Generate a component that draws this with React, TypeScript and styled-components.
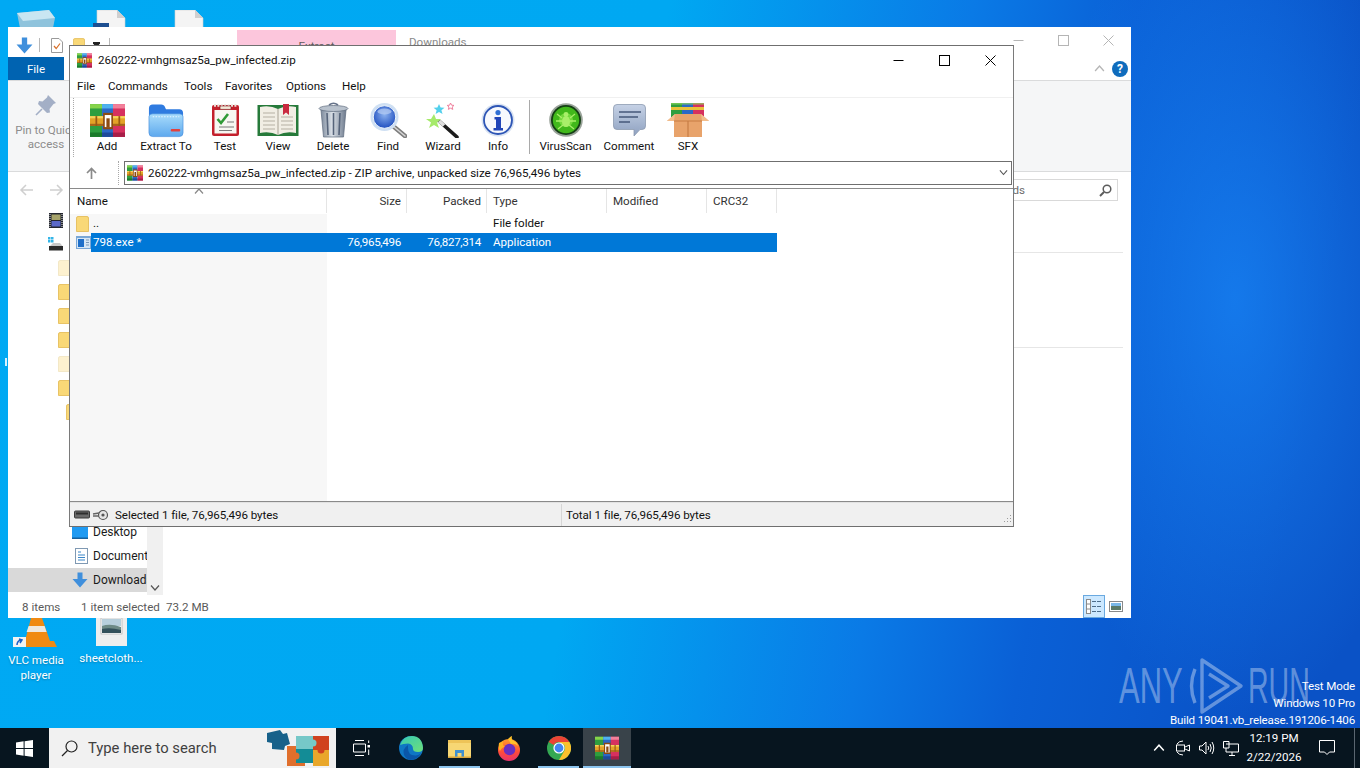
import styled, { createGlobalStyle } from "styled-components";
import { ReactNode } from "react";

const GlobalStyle = createGlobalStyle`
    html, body {
        margin: 0;
        padding: 0;
        width: 1360px;
        height: 768px;
        overflow: hidden;
        font-family: Roboto, "Liberation Sans", sans-serif;
        font-size: 11.6px;
        color: #1a1a1a;
    }
    * { box-sizing: border-box; }
    svg { display: block; flex-shrink: 0; }
`;

/* ---------- desktop ---------- */

const Screen = styled.div`
    width: 1360px;
    height: 768px;
    display: flex;
    flex-direction: column;
    overflow: hidden;
`;

const Wallpaper = styled.div`
    flex: 1;
    position: relative;
    overflow: hidden;
    background:
        radial-gradient(ellipse 200px 420px at 1235px 300px, rgba(24, 132, 245, 0.75), rgba(24, 132, 245, 0) 100%),
        linear-gradient(100deg, #00a9f3 0, #00a8f2 660px, #0a7ae6 960px, #0a60d6 1120px, #0a52c6 1360px);
`;

const ShortcutIcon = styled.div<{ $x: number; $y: number; $w: number }>`
    position: absolute;
    left: ${(p) => p.$x}px;
    top: ${(p) => p.$y}px;
    width: ${(p) => p.$w}px;
    display: flex;
    flex-direction: column;
    align-items: center;
`;

const ShortcutLabel = styled.div`
    color: #fff;
    text-align: center;
    line-height: 15px;
    margin-top: 5px;
    white-space: nowrap;
    text-shadow: 0 1px 2px rgba(0, 0, 0, 0.25);
`;

const EdgeSpeck = styled.div`
    position: absolute;
    left: 5px;
    top: 358px;
    width: 2px;
    height: 8px;
    background: #d8f2ff;
`;

/* ---------- explorer behind ---------- */

const ExplorerWindow = styled.div`
    position: absolute;
    left: 8px;
    top: 27px;
    width: 1123px;
    height: 591px;
    background: #fff;
    display: flex;
    flex-direction: column;
`;

const ExplorerTitle = styled.div`
    height: 30px;
    display: flex;
    align-items: stretch;
    color: #8a8a8a;
`;

const QuickAccess = styled.div`
    width: 229px;
    display: flex;
    align-items: center;
    padding: 6px 0 0 8px;
    gap: 6px;
`;

const QuickSep = styled.div`
    width: 1px;
    height: 14px;
    background: #b8b8b8;
    margin-right: 5px;
`;

const DropMark = styled.div`
    width: 7px;
    height: 7px;
    margin: 0 3px 0 2px;
    border-top: 1px solid #222;
    clip-path: polygon(0 0, 100% 0, 100% 25%, 50% 100%, 0 25%);
    background: #222;
`;

const ContextTab = styled.div`
    width: 159px;
    margin-top: 3px;
    background: #fcc6dc;
    text-align: center;
    padding-top: 9px;
    color: #5c5c5c;
`;

const TitleText = styled.div`
    padding: 8px 0 0 13px;
    flex: 1;
`;

const ExplorerButtons = styled.div`
    display: flex;
    align-items: flex-start;
    padding-top: 8px;
    margin-right: 17px;
    gap: 34px;
`;

const TabRow = styled.div`
    height: 23px;
    display: flex;
    align-items: center;
    justify-content: space-between;
    padding-right: 3px;
`;

const FileTab = styled.div`
    width: 56px;
    height: 23px;
    background: #0063b1;
    color: #fff;
    display: flex;
    align-items: center;
    justify-content: center;
`;

const TabRight = styled.div`
    display: flex;
    align-items: center;
    gap: 7px;
`;

const HelpBadge = styled.div`
    width: 16px;
    height: 16px;
    border-radius: 50%;
    background: #0f6cbd;
    color: #fff;
    font-weight: 700;
    font-size: 12px;
    line-height: 16px;
    text-align: center;
`;

const Ribbon = styled.div`
    height: 92px;
    background: #f5f6f7;
    border-top: 1px solid #dadbdc;
    border-bottom: 1px solid #dadbdc;
    display: flex;
    flex-direction: column;
    align-items: flex-start;
    padding: 13px 0 0 7px;
    color: #8d8d8d;
    line-height: 14px;
`;

const PinBlock = styled.div`
    display: flex;
    flex-direction: column;
    align-items: center;
    text-align: center;
    width: 62px;
    white-space: nowrap;
    gap: 7px;
`;

const NavBar = styled.div`
    height: 36px;
    display: flex;
    align-items: center;
    padding: 0 13px 0 11px;
`;

const NavArrows = styled.div`
    display: flex;
    gap: 17px;
`;

const SearchBox = styled.div`
    margin-left: auto;
    width: 200px;
    height: 22px;
    border: 1px solid #d9d9d9;
    display: flex;
    align-items: center;
    justify-content: space-between;
    padding: 0 5px 0 10px;
    color: #6d6d6d;
`;

const ExplorerBody = styled.div`
    flex: 1;
    display: flex;
    min-height: 0;
`;

const NavTree = styled.div`
    width: 139px;
    display: flex;
    flex-direction: column;
    overflow: hidden;
`;

const TreeRow = styled.div<{ $indent: number; $selected?: boolean }>`
    height: 24px;
    flex-shrink: 0;
    display: flex;
    align-items: center;
    gap: 5px;
    padding-left: ${(p) => p.$indent}px;
    background: ${(p) => (p.$selected ? "#d9d9d9" : "transparent")};
    white-space: nowrap;
    font-size: 12px;
`;

const TreeScroll = styled.div`
    width: 16px;
    background: #f0f0f0;
    display: flex;
    flex-direction: column;
    justify-content: flex-end;
    align-items: center;
    padding-bottom: 4px;
`;

const ContentPane = styled.div`
    flex: 1;
    padding: 0 8px 0 0;
`;

const GroupLine = styled.div<{ $gap: number }>`
    height: 1px;
    margin-top: ${(p) => p.$gap}px;
    background: #e6e6e6;
`;

const ExplorerStatus = styled.div`
    height: 23px;
    display: flex;
    align-items: center;
    padding-left: 14px;
    color: #5a5a5a;
`;

const StatusPart = styled.span<{ $w: number }>`
    width: ${(p) => p.$w}px;
    white-space: nowrap;
`;

const ViewButtons = styled.div`
    margin-left: auto;
    display: flex;
    align-items: center;
    height: 100%;
    gap: 4px;
    padding-right: 8px;
`;

const ViewButton = styled.div<{ $on?: boolean }>`
    width: ${(p) => (p.$on ? "22px" : "14px")};
    height: 23px;
    display: flex;
    align-items: center;
    justify-content: center;
    background: ${(p) => (p.$on ? "#cce8ff" : "transparent")};
    border: ${(p) => (p.$on ? "1px solid #6aa9e0" : "none")};
`;

/* ---------- winrar window ---------- */

const RarWindow = styled.div`
    position: absolute;
    left: 69px;
    top: 45px;
    width: 945px;
    height: 482px;
    background: #fff;
    border: 1px solid #6f6f6f;
    border-left-color: #7a7a7a;
    border-right-color: #7a7a7a;
    display: flex;
    flex-direction: column;
`;

const RarTitle = styled.div`
    height: 28px;
    display: flex;
    align-items: center;
    padding: 0 0 0 7px;
    gap: 6px;
    color: #111;
`;

const RarTitleText = styled.div`
    flex: 1;
`;

const RarControls = styled.div`
    display: flex;
    align-items: center;
    margin-right: 17px;
    gap: 35px;
`;

const MenuBar = styled.div`
    height: 24px;
    display: flex;
    align-items: center;
    padding-left: 7px;
    border-bottom: 1px solid #f0f0f0;
    color: #111;
`;

const MenuItem = styled.span<{ $w: number }>`
    width: ${(p) => p.$w}px;
`;

const ToolbarRow = styled.div`
    height: 59px;
    display: flex;
    padding-left: 3px;
`;

const Gripper = styled.div`
    width: 1px;
    height: 100%;
    border-left: 1px dotted #a8a8a8;
`;

const ToolButtons = styled.div`
    display: flex;
    padding-left: 11px;
`;

const ToolButton = styled.div<{ $w: number }>`
    width: ${(p) => p.$w}px;
    display: flex;
    flex-direction: column;
    align-items: center;
    justify-content: flex-end;
    height: 55px;
    color: #111;
    white-space: nowrap;
`;

const ToolArt = styled.div`
    height: 38px;
    display: flex;
    align-items: center;
    justify-content: center;
`;

const ToolSep = styled.div`
    width: 1px;
    height: 54px;
    margin-top: 2px;
    background: #a9a9a9;
`;

const AddressRow = styled.div`
    height: 28px;
    padding-top: 4px;
    display: flex;
    align-items: stretch;
`;

const UpSlot = styled.div`
    width: 49px;
    padding-left: 16px;
    display: flex;
    align-items: center;
    border-right: 1px dotted #a8a8a8;
    margin-right: 5px;
`;

const AddressBox = styled.div`
    flex: 1;
    border: 1px solid #6f6f6f;
    display: flex;
    align-items: center;
    gap: 5px;
    padding: 0 3px 0 2px;
    color: #111;
    margin-right: 1px;
`;

const AddressText = styled.div`
    flex: 1;
`;

const FileList = styled.div`
    flex: 1;
    margin-top: 3px;
    border-top: 1px solid #8a8a8a;
    border-bottom: 1px solid #8a8a8a;
    display: flex;
    flex-direction: column;
    min-height: 0;
`;

const ListHeader = styled.div`
    position: relative;
    display: grid;
    grid-template-columns: 257px 80px 80px 120px 100px 70px;
    height: 25px;
`;

const HeadCell = styled.div<{ $right?: boolean; $first?: boolean }>`
    display: flex;
    align-items: center;
    justify-content: ${(p) => (p.$right ? "flex-end" : "flex-start")};
    padding: ${(p) => (p.$right ? "0 5px 0 0" : p.$first ? "0 0 0 7px" : "0 0 0 6px")};
    border-right: 1px solid #e5e5e5;
    color: ${(p) => (p.$first ? "#111" : "#333")};
    height: 24px;
`;

const SortMark = styled.div`
    position: absolute;
    left: 124px;
    top: -1px;
`;

const ListBody = styled.div`
    flex: 1;
    background: linear-gradient(to right, #f7f7f7 257px, #fff 257px);
`;

const FileRow = styled.div`
    display: grid;
    grid-template-columns: 257px 80px 80px 120px 100px 70px;
    height: 19px;
`;

const NameCell = styled.div`
    display: flex;
    align-items: center;
    padding-left: 6px;
`;

const IconSlot = styled.div`
    width: 15px;
    display: flex;
`;

const FileName = styled.div<{ $selected?: boolean }>`
    flex: 1;
    height: 100%;
    padding: 0 0 1px 2px;
    display: flex;
    align-items: center;
    background: ${(p) => (p.$selected ? "#0078d7" : "transparent")};
    color: ${(p) => (p.$selected ? "#fff" : "#111")};
`;

const DataCell = styled.div<{ $selected?: boolean; $right?: boolean }>`
    display: flex;
    align-items: center;
    justify-content: ${(p) => (p.$right ? "flex-end" : "flex-start")};
    padding: ${(p) => (p.$right ? "0 6px 1px 0" : "0 0 1px 6px")};
    letter-spacing: ${(p) => (p.$right ? "-0.3px" : "0")};
    background: ${(p) => (p.$selected ? "#0078d7" : "transparent")};
    color: ${(p) => (p.$selected ? "#fff" : "#111")};
`;

const RarStatus = styled.div`
    height: 24px;
    padding-top: 1px;
    background: #f0f0f0;
    border-top: 1px solid #e2e2e2;
    display: flex;
    align-items: center;
    position: relative;
    color: #111;
    letter-spacing: -0.06px;
`;

const StatusLeft = styled.div`
    width: 492px;
    display: flex;
    align-items: center;
    gap: 6px;
    padding-left: 4px;
    height: 100%;
    border-right: 1px solid #d6d6d6;
`;

const StatusRight = styled.div`
    padding-left: 4px;
`;

const SizeGrip = styled.div`
    position: absolute;
    right: 1px;
    bottom: 1px;
`;

/* ---------- overlays ---------- */

const Watermark = styled.div`
    position: absolute;
    left: 1119px;
    top: 656px;
    display: flex;
    align-items: center;
    color: rgba(255, 255, 255, 0.36);
    font-family: "Liberation Sans", sans-serif;
    font-size: 50px;
    line-height: 60px;
`;

const MarkWord = styled.span<{ $w: number; $scale: number }>`
    display: inline-block;
    width: ${(p) => p.$w}px;
    transform: scaleX(${(p) => p.$scale});
    transform-origin: left center;
`;

const SystemNote = styled.div`
    position: absolute;
    right: 5px;
    top: 678px;
    text-align: right;
    color: #fff;
    line-height: 17px;
    letter-spacing: -0.16px;
`;

/* ---------- taskbar ---------- */

const Taskbar = styled.div`
    height: 40px;
    background: #07151f;
    display: flex;
    align-items: stretch;
`;

const StartButton = styled.div`
    width: 49px;
    display: flex;
    align-items: center;
    justify-content: center;
`;

const SearchBar = styled.div`
    width: 287px;
    background: #f1f1f1;
    display: flex;
    align-items: center;
    padding-left: 12px;
    gap: 10px;
    color: #3f3f3f;
    font-size: 14.8px;
`;

const SearchHint = styled.span`
    flex: 1;
`;

const PuzzleSlot = styled.div`
    margin-right: 6px;
`;

const TaskButton = styled.div<{ $w: number; $running?: boolean; $active?: boolean }>`
    position: relative;
    width: ${(p) => p.$w}px;
    display: flex;
    align-items: center;
    justify-content: center;
    background: ${(p) => (p.$active ? "#39434a" : "transparent")};
    &::after {
        content: "";
        display: ${(p) => (p.$running ? "block" : "none")};
        position: absolute;
        left: ${(p) => (p.$active ? "0" : "4px")};
        right: ${(p) => (p.$active ? "0" : "4px")};
        bottom: 0;
        height: 2px;
        background: #8cc4ee;
    }
`;

const Tray = styled.div`
    margin-left: auto;
    display: flex;
    align-items: stretch;
`;

const TrayIcon = styled.div`
    width: 24px;
    display: flex;
    align-items: center;
    justify-content: center;
`;

const Clock = styled.div`
    width: 62px;
    color: #fff;
    text-align: center;
    line-height: 19px;
    padding-top: 1px;
`;

const NotifySlot = styled.div`
    width: 43px;
    display: flex;
    align-items: center;
    justify-content: center;
`;

const ShowDesktop = styled.div`
    width: 6px;
    margin-left: 6px;
    border-left: 1px solid #5a6670;
`;

/* ---------- drawings ---------- */

function RarIcon(props: { size: number }) {
    return (
        <svg width={props.size} height={props.size} viewBox="0 0 32 32">
            <rect x="0" y="1" width="11" height="30" fill="#2f9e3f" />
            <rect x="11" y="1" width="10" height="30" fill="#2b69c6" />
            <rect x="21" y="1" width="11" height="30" fill="#d6315f" />
            <rect x="0" y="1" width="11" height="4" fill="#86d44a" />
            <rect x="11" y="1" width="10" height="4" fill="#4fb2ee" />
            <rect x="21" y="1" width="11" height="4" fill="#f2809a" />
            <rect x="0" y="27" width="11" height="4" fill="#1b7a2b" />
            <rect x="11" y="27" width="10" height="4" fill="#1f4a9a" />
            <rect x="21" y="27" width="11" height="4" fill="#a81e48" />
            <rect x="0" y="12" width="32" height="9" fill="#e3a328" />
            <rect x="0" y="12" width="32" height="2" fill="#f6d35c" />
            <rect x="0" y="19" width="32" height="2" fill="#a8651a" />
            <rect x="5" y="12" width="1.6" height="9" fill="#9a5a14" />
            <rect x="26" y="12" width="1.6" height="9" fill="#9a5a14" />
            <rect x="12" y="9" width="9" height="15" fill="#8d4b12" />
            <rect x="13.5" y="11" width="6" height="11" fill="#fff" />
            <rect x="15" y="14" width="3" height="8" fill="#8d4b12" />
        </svg>
    );
}

function ExtractIcon() {
    return (
        <svg width="36" height="35" viewBox="0 0 38 36">
            <defs>
                <linearGradient id="extractFront" x1="0" y1="0" x2="0" y2="1">
                    <stop offset="0" stopColor="#a9dcfb" />
                    <stop offset="1" stopColor="#5ea9ee" />
                </linearGradient>
            </defs>
            <path d="M1 5 Q1 1 5 1 H14 Q17 1 18 4 L19 6 H33 Q37 6 37 10 V14 H1 Z" fill="#2f7be0" />
            <path d="M1 14 Q1 11 5 11 H33 Q37 11 37 14 V31 Q37 35 33 35 H5 Q1 35 1 31 Z" fill="url(#extractFront)" stroke="#3b86dc" strokeWidth="0.6" />
            <path d="M5 14 H33" stroke="#e9f6ff" strokeWidth="1.2" strokeDasharray="1.5 1.5" />
            <rect x="24" y="27" width="10" height="2.6" rx="1" fill="#e2413e" />
        </svg>
    );
}

function TestIcon() {
    return (
        <svg width="29" height="34" viewBox="0 0 29 34">
            <rect x="1" y="2" width="27" height="31" rx="2" fill="#c3202c" />
            <rect x="3.5" y="7" width="22" height="23.5" fill="#f7f7f2" />
            <path d="M3 2.5 H26" stroke="#e9e4da" strokeWidth="2.4" strokeDasharray="2 1.4" />
            <rect x="9" y="3" width="11" height="3.4" rx="1" fill="#f2e9d8" stroke="#7a1a1e" strokeWidth="0.6" />
            <path d="M6.5 16 L10 20 L17 11" fill="none" stroke="#2f9a37" strokeWidth="2.6" />
            <path d="M16 19 H23 M8 24 H23 M8 27.5 H21" stroke="#7b7b7b" strokeWidth="1.1" />
        </svg>
    );
}

function ViewIcon() {
    return (
        <svg width="42" height="33" viewBox="0 0 42 33">
            <path d="M0.5 1 H41.5 V32 H0.5 Z" fill="#267a3a" />
            <path d="M3 3 Q13 1 21 5 Q29 1 39 3 V29 Q29 27 21 31 Q13 27 3 29 Z" fill="#f1eee4" />
            <path d="M21 5 V31" stroke="#a8a294" strokeWidth="1" />
            <path d="M6 9 H18 M6 13 H18 M6 17 H18 M6 21 H18 M6 25 H18 M24 13 H36 M24 17 H36 M24 21 H36 M24 25 H36" stroke="#b5b0a3" strokeWidth="1" />
            <path d="M26 0 H32 V11 L29 8.5 L26 11 Z" fill="#c92a3f" />
        </svg>
    );
}

function DeleteIcon() {
    return (
        <svg width="31" height="36" viewBox="0 0 31 36">
            <defs>
                <linearGradient id="binBody" x1="0" y1="0" x2="1" y2="0">
                    <stop offset="0" stopColor="#7d8a9c" />
                    <stop offset="0.45" stopColor="#dbe1e8" />
                    <stop offset="1" stopColor="#6d7a8d" />
                </linearGradient>
            </defs>
            <path d="M3 8 H28 L25.5 35 H5.5 Z" fill="url(#binBody)" stroke="#5d6a7c" strokeWidth="0.7" />
            <path d="M9 11 L10 33 M15.5 11 V33 M22 11 L21 33" stroke="#56647a" strokeWidth="1.6" />
            <ellipse cx="15.5" cy="6.5" rx="14.5" ry="3" fill="#b9c2cd" stroke="#5d6a7c" strokeWidth="0.7" />
            <path d="M11 3 Q15.5 -0.5 20 3" fill="none" stroke="#66738a" strokeWidth="1.6" />
        </svg>
    );
}

function FindIcon() {
    return (
        <svg width="37" height="35" viewBox="0 0 37 35">
            <defs>
                <radialGradient id="findGlass" cx="0.5" cy="0.4" r="0.6">
                    <stop offset="0" stopColor="#8ab0ee" />
                    <stop offset="1" stopColor="#1f4fc0" />
                </radialGradient>
            </defs>
            <path d="M23 23 L35 33" stroke="#7d7d7d" strokeWidth="4.6" strokeLinecap="round" />
            <path d="M23 23 L35 33" stroke="#d5d5d5" strokeWidth="1.6" strokeLinecap="round" />
            <circle cx="14.5" cy="14" r="14" fill="#cfe0f3" />
            <circle cx="14.5" cy="14" r="11.3" fill="url(#findGlass)" stroke="#eef5fc" strokeWidth="1" />
            <ellipse cx="14.5" cy="8.5" rx="7" ry="3" fill="#b9cff4" opacity="0.7" />
        </svg>
    );
}

function WizardIcon() {
    return (
        <svg width="36" height="35" viewBox="0 0 36 35">
            <path d="M14 18 L32 34" stroke="#1c1c1c" strokeWidth="3.6" strokeLinecap="round" />
            <path d="M14 18 L19 22.5" stroke="#e0e0e0" strokeWidth="3.6" />
            <path d="M9 11 L11 16 L16 16 L12 19.5 L14 25 L9 22 L4 25 L6 19.5 L1 16 L6 16 Z" fill="#a6ea6b" />
            <path d="M14 1 L15.6 4.6 L19.5 4.8 L16.4 7.2 L17.6 11 L14 9 L10.6 11 L11.6 7.2 L8.6 4.8 L12.4 4.6 Z" fill="#52d0ec" />
            <path d="M25.5 0 L26.6 2.2 L29 2.4 L27.2 4 L27.8 6.4 L25.5 5.2 L23.4 6.4 L24 4 L22.2 2.4 L24.6 2.2 Z" fill="none" stroke="#ef7f9c" strokeWidth="1" />
        </svg>
    );
}

function InfoIcon() {
    return (
        <svg width="34" height="34" viewBox="0 0 34 34">
            <circle cx="17" cy="17" r="16.5" fill="#d9e3f2" />
            <circle cx="17" cy="17" r="14" fill="#f7f9fd" stroke="#2d55b5" strokeWidth="1.8" />
            <circle cx="17" cy="9.6" r="2.6" fill="#2f6fd4" />
            <path d="M13.5 14 H20 V25 H22 V27.5 H12.5 V25 H15 V16.4 H13.5 Z" fill="#2145b8" />
        </svg>
    );
}

function VirusIcon() {
    return (
        <svg width="34" height="34" viewBox="0 0 34 34">
            <circle cx="17" cy="17" r="16.8" fill="#9aa39a" />
            <circle cx="17" cy="17" r="15" fill="#143f14" />
            <circle cx="17" cy="17" r="13.2" fill="#41b81b" />
            <circle cx="17" cy="17" r="7" fill="#72d83c" />
            <ellipse cx="17" cy="18.5" rx="4" ry="5.5" fill="#a9ef6a" />
            <circle cx="17" cy="11.5" r="2.4" fill="#a9ef6a" />
            <path d="M8 11 L13 15 M26 11 L21 15 M7 18 H13 M27 18 H21 M9 26 L14 22 M25 26 L20 22" stroke="#a9ef6a" strokeWidth="1.3" />
        </svg>
    );
}

function CommentIcon() {
    return (
        <svg width="33" height="33" viewBox="0 0 33 33">
            <defs>
                <linearGradient id="bubbleFill" x1="0" y1="0" x2="0" y2="1">
                    <stop offset="0" stopColor="#c6d2e6" />
                    <stop offset="1" stopColor="#8ea1c0" />
                </linearGradient>
            </defs>
            <path d="M4 0.5 H29 Q32.5 0.5 32.5 4 V22 Q32.5 25.5 29 25.5 H27 L21 32 V25.5 H4 Q0.5 25.5 0.5 22 V4 Q0.5 0.5 4 0.5 Z" fill="url(#bubbleFill)" stroke="#8d9bb0" strokeWidth="0.8" />
            <path d="M6 8 H28 M6 13 H25 M6 18 H17" stroke="#46587a" strokeWidth="1.7" />
        </svg>
    );
}

function SfxIcon() {
    return (
        <svg width="42" height="34" viewBox="0 0 42 34">
            <rect x="4" y="0" width="11" height="14" fill="#2f9e3f" />
            <rect x="15" y="0" width="11" height="14" fill="#2b69c6" />
            <rect x="26" y="0" width="11" height="14" fill="#d6315f" />
            <rect x="4" y="4" width="33" height="3" fill="#e8c13a" />
            <rect x="4" y="0" width="33" height="1.6" fill="#8bd45a" opacity="0.7" />
            <path d="M8 11 H34 L42 18 H35 V34 H7 V18 H0 Z" fill="#e8a36b" />
            <path d="M7 18 H35" stroke="#c77d45" strokeWidth="1" />
            <path d="M21 18 V34" stroke="#c77d45" strokeWidth="1.2" />
            <path d="M8 11 L0 18 H7 Z M34 11 L42 18 H35 Z" fill="#f2bd8c" />
        </svg>
    );
}

function FolderIcon(props: { pale?: boolean; w?: number; h?: number }) {
    const fill = props.pale ? "#fdf1cf" : "#f9d877";
    const edge = props.pale ? "#f0e3bf" : "#e2b94f";
    return (
        <svg width={props.w ?? 13} height={props.h ?? 16} viewBox="0 0 13 16">
            <path d="M0.5 2 Q0.5 0.5 2 0.5 H11 Q12.5 0.5 12.5 2 V15.5 H0.5 Z" fill={fill} stroke={edge} strokeWidth="0.8" />
        </svg>
    );
}

function ExeIcon() {
    return (
        <svg width="15" height="13" viewBox="0 0 15 13">
            <rect x="0" y="0" width="15" height="13" fill="#7aa7d6" />
            <rect x="1" y="2" width="13" height="10" fill="#d6e6f5" />
            <rect x="2" y="3" width="6" height="8" fill="#1f6fc9" />
            <path d="M10 4 H13 M10 6.5 H13 M10 9 H13" stroke="#7a98b8" strokeWidth="1" />
        </svg>
    );
}

function Chevron(props: { up?: boolean; color: string; w: number }) {
    return (
        <svg width={props.w} height={props.w * 0.6} viewBox="0 0 10 6">
            <path d={props.up ? "M1 5.5 L5 1 L9 5.5" : "M1 0.5 L5 5 L9 0.5"} fill="none" stroke={props.color} strokeWidth="1.2" />
        </svg>
    );
}

function Arrow(props: { dir: "left" | "right" }) {
    const d = props.dir === "left" ? "M14 6 H2 M7 1 L2 6 L7 11" : "M0 6 H12 M7 1 L12 6 L7 11";
    return (
        <svg width="14" height="12" viewBox="0 0 14 12">
            <path d={d} fill="none" stroke="#cfcfcf" strokeWidth="1.5" />
        </svg>
    );
}

function WinMin(props: { color: string }) {
    return (
        <svg width="11" height="11" viewBox="0 0 11 11">
            <path d="M0.5 5.5 H10.5" stroke={props.color} strokeWidth="1" />
        </svg>
    );
}

function WinMax(props: { color: string }) {
    return (
        <svg width="11" height="11" viewBox="0 0 11 11">
            <rect x="0.5" y="0.5" width="10" height="10" fill="none" stroke={props.color} strokeWidth="1" />
        </svg>
    );
}

function WinClose(props: { color: string }) {
    return (
        <svg width="11" height="11" viewBox="0 0 11 11">
            <path d="M0.5 0.5 L10.5 10.5 M10.5 0.5 L0.5 10.5" stroke={props.color} strokeWidth="1" />
        </svg>
    );
}

function DownArrowIcon(props: { size: number }) {
    return (
        <svg width={props.size} height={props.size} viewBox="0 0 16 16">
            <path d="M5.5 0.5 H10.5 V7 H15.5 L8 15.5 L0.5 7 H5.5 Z" fill="#3f8fdc" />
        </svg>
    );
}

function CheckDocIcon() {
    return (
        <svg width="16" height="15" viewBox="0 0 16 15">
            <path d="M0.5 0.5 H8 L11.5 4 V14.5 H0.5 Z" fill="#fff" stroke="#9a9a9a" strokeWidth="1" />
            <path d="M3 8 L5.2 10.5 L9 5.5" fill="none" stroke="#d8702a" strokeWidth="1.2" />
        </svg>
    );
}

function PinIcon() {
    return (
        <svg width="22" height="22" viewBox="0 0 22 22">
            <path d="M13 1 L21 9 L18.5 10 L14.5 15 L15 18.5 L12 19 L3 10 L4 7 L7.5 7.5 L12 3.5 Z" fill="#a3afc6" />
            <path d="M7 15 L1 21" stroke="#a3afc6" strokeWidth="1.6" />
        </svg>
    );
}

function LensIcon() {
    return (
        <svg width="13" height="13" viewBox="0 0 13 13">
            <circle cx="8" cy="5" r="3.8" fill="none" stroke="#5c5c5c" strokeWidth="1.5" />
            <path d="M5 8 L1 12" stroke="#5c5c5c" strokeWidth="1.9" />
        </svg>
    );
}

function FilmIcon() {
    return (
        <svg width="14" height="15" viewBox="0 0 14 15">
            <rect x="0" y="0" width="14" height="15" fill="#23262e" />
            <rect x="2.5" y="1.5" width="9" height="5.5" fill="#a6a36a" />
            <rect x="2.5" y="8" width="9" height="5.5" fill="#5a68c8" />
            <path d="M1 1 V14 M13 1 V14" stroke="#e9e9e9" strokeWidth="1" strokeDasharray="1 1" />
        </svg>
    );
}

function NetDriveIcon() {
    return (
        <svg width="15" height="14" viewBox="0 0 15 14">
            <rect x="0" y="0" width="2.5" height="2.5" fill="#33b5e8" />
            <rect x="3" y="0" width="2.5" height="2.5" fill="#33b5e8" />
            <rect x="0" y="3" width="2.5" height="2.5" fill="#33b5e8" />
            <rect x="3" y="3" width="2.5" height="2.5" fill="#33b5e8" />
            <path d="M2 9 L5 6 H12 L14.5 9 Z" fill="#c8c8c8" />
            <rect x="1" y="9" width="14" height="4.5" fill="#2c2c2c" />
        </svg>
    );
}

function DesktopFolderIcon() {
    return (
        <svg width="16" height="14" viewBox="0 0 16 14">
            <rect x="0" y="0" width="16" height="14" fill="#1f9af2" />
            <rect x="0" y="12.5" width="16" height="1.5" fill="#15619e" />
        </svg>
    );
}

function DocsIcon() {
    return (
        <svg width="13" height="16" viewBox="0 0 13 16">
            <rect x="0.5" y="0.5" width="12" height="15" fill="#fff" stroke="#7f99b3" strokeWidth="1" />
            <path d="M3 4 H6 M3 7 H10 M3 9.5 H10 M3 12 H10" stroke="#3a86c8" strokeWidth="1" />
        </svg>
    );
}

function DetailsViewIcon() {
    return (
        <svg width="16" height="15" viewBox="0 0 16 15">
            <rect x="0.5" y="0.5" width="4" height="14" fill="#fff" stroke="#8a8a8a" strokeWidth="1" />
            <path d="M0.5 5 H4.5 M0.5 10 H4.5" stroke="#8a8a8a" strokeWidth="1" />
            <path d="M6 2.5 H10 M11 2.5 H15 M6 7.5 H10 M11 7.5 H15 M6 12.5 H10 M11 12.5 H15" stroke="#4d6d8c" strokeWidth="1" />
        </svg>
    );
}

function ThumbViewIcon() {
    return (
        <svg width="14" height="11" viewBox="0 0 14 11">
            <rect x="0.5" y="0.5" width="13" height="10" fill="#fff" stroke="#8a8a8a" strokeWidth="1" />
            <rect x="2" y="2" width="10" height="3" fill="#7ab8e8" />
            <rect x="2" y="5" width="10" height="4" fill="#5a7a68" />
        </svg>
    );
}

function DriveKeyIcon() {
    return (
        <svg width="35" height="12" viewBox="0 0 35 12">
            <rect x="0.5" y="2" width="15" height="7" rx="1" fill="#6a6a6a" stroke="#3a3a3a" strokeWidth="1" />
            <rect x="2" y="3.5" width="12" height="2" fill="#2f2f2f" />
            <circle cx="29" cy="6" r="4.5" fill="#e5e5e5" stroke="#555" strokeWidth="1.2" />
            <circle cx="29" cy="6" r="1.6" fill="#555" />
            <path d="M19 7 H25 M19 5 L25 4" stroke="#666" strokeWidth="1.6" />
        </svg>
    );
}

function GripIcon() {
    return (
        <svg width="11" height="11" viewBox="0 0 11 11">
            <path d="M9 1 H10 V2 H9 Z M6 4 H7 V5 H6 Z M9 4 H10 V5 H9 Z M3 7 H4 V8 H3 Z M6 7 H7 V8 H6 Z M9 7 H10 V8 H9 Z" fill="#9a9a9a" />
        </svg>
    );
}

function UpArrowIcon() {
    return (
        <svg width="11" height="12" viewBox="0 0 11 12">
            <path d="M5.5 12 V2 M1 6 L5.5 1.5 L10 6" fill="none" stroke="#8a8a8a" strokeWidth="1.7" />
        </svg>
    );
}

function RecycleTop() {
    return (
        <svg width="38" height="18" viewBox="0 0 38 18">
            <path d="M0 3 L32 0 L38 8 L36 18 H3 Z" fill="#8fc3dc" />
            <path d="M0 3 L32 0 L38 8 L6 11 Z" fill="#c9e6f2" />
        </svg>
    );
}

function DocTop(props: { w: number; blue?: boolean }) {
    return (
        <svg width={props.w} height="18" viewBox="0 0 32 18">
            <path d="M4 0 H24 L32 8 V18 H4 Z" fill="#f4f4f4" stroke="#d0d0d0" strokeWidth="0.6" />
            <path d="M24 0 V8 H32 Z" fill="#cfcfcf" />
            {props.blue && <rect x="0" y="13" width="16" height="5" fill="#1d4f91" />}
        </svg>
    );
}

function VlcIcon() {
    return (
        <svg width="46" height="30" viewBox="0 0 46 30">
            <path d="M18 0 H29 L37 23 H41 L44 29 H7 L9 23 H12 Z" fill="#f08a12" />
            <path d="M15.6 8 H31.6 L33.6 14 H13.6 Z" fill="#efe8de" />
            <rect x="0" y="19" width="13" height="10" fill="#f2f2f2" />
            <path d="M4 27 Q4 23 8 22 M6 21 L9 22 L7 25" fill="none" stroke="#1c5fc8" strokeWidth="1.5" />
        </svg>
    );
}

function SheetIcon() {
    return (
        <svg width="31" height="28" viewBox="0 0 31 28">
            <rect x="0" y="0" width="31" height="28" fill="#eeeeee" />
            <rect x="5" y="0" width="21" height="16" fill="#fff" stroke="#b0b0b0" strokeWidth="0.7" />
            <rect x="6" y="1" width="19" height="7" fill="#b7cfdc" />
            <path d="M6 8 Q14 5 25 9 V15 H6 Z" fill="#6d8a86" />
            <path d="M6 11 Q14 9 25 12 V15 H6 Z" fill="#33505a" />
        </svg>
    );
}

function LogoPlay() {
    return (
        <svg width="60" height="58" viewBox="0 0 60 58">
            <g fill="none" stroke="#fff" strokeOpacity="0.36" strokeWidth="3.4" strokeLinejoin="round">
                <path d="M14 3 L53 29 L14 55 Z" />
                <path d="M21 17 L40 29 L21 41" />
                <path d="M7 12 Q0 29 7 46" />
            </g>
        </svg>
    );
}

function WindowsLogo() {
    return (
        <svg width="17" height="17" viewBox="0 0 17 17">
            <path d="M0 2.4 L7.6 1.3 V8 H0 Z M8.6 1.2 L17 0 V8 H8.6 Z M0 9 H7.6 V15.7 L0 14.6 Z M8.6 9 H17 V17 L8.6 15.8 Z" fill="#fff" />
        </svg>
    );
}

function SearchGlyph() {
    return (
        <svg width="17" height="17" viewBox="0 0 17 17">
            <circle cx="10.5" cy="6.5" r="5.5" fill="none" stroke="#222" strokeWidth="1.2" />
            <path d="M6.5 10.5 L1 16" stroke="#222" strokeWidth="1.3" />
        </svg>
    );
}

function PuzzleArt() {
    return (
        <svg width="64" height="36" viewBox="0 0 64 36">
            <path d="M1 3 L14 0 L17 4 L21 3 L24 14 L19 16 L18 20 L6 19 L6 13 L1 12 Z" fill="#17618a" />
            <rect x="21" y="16" width="18" height="20" fill="#e06f2c" />
            <rect x="30" y="6" width="17" height="15" fill="#76c8c8" />
            <rect x="30" y="19" width="17" height="14" fill="#138c96" />
            <rect x="47" y="6" width="16" height="14" fill="#d0421f" />
            <rect x="47" y="20" width="16" height="16" fill="#e9a72a" />
            <circle cx="30" cy="26" r="3.5" fill="#e06f2c" />
            <circle cx="47" cy="13" r="3.5" fill="#76c8c8" />
            <circle cx="55" cy="20" r="3.5" fill="#d0421f" />
        </svg>
    );
}

function TaskViewIcon() {
    return (
        <svg width="17" height="16" viewBox="0 0 17 16">
            <path d="M0.5 4 H12.5 V12 H0.5 Z M2 0.5 H11 M2 15.5 H11" fill="none" stroke="#fff" strokeWidth="1" />
            <rect x="14.5" y="5" width="2.5" height="2.5" fill="#fff" />
            <path d="M15.7 0.5 V3 M15.7 9.5 V15" stroke="#fff" strokeWidth="1" />
        </svg>
    );
}

function EdgeIcon() {
    return (
        <svg width="24" height="24" viewBox="0 0 24 24">
            <defs>
                <linearGradient id="edgeTop" x1="0" y1="0" x2="1" y2="1">
                    <stop offset="0" stopColor="#36c8b4" />
                    <stop offset="1" stopColor="#6ee07a" />
                </linearGradient>
            </defs>
            <circle cx="12" cy="12" r="12" fill="#0f77c4" />
            <path d="M1 9 Q4 0 13 0 Q23 0 24 12 Q24 16 19 16 Q14 16 14 13 Q14 8 9 7.5 Q4 7.5 1 9 Z" fill="url(#edgeTop)" />
            <path d="M9 12 Q9 20 17 19.5 Q20 19 22 17 Q19 24 11 24 Q7 23 5 19 Q3 13 9 9 Z" fill="#0a56a8" />
        </svg>
    );
}

function ExplorerFolder() {
    return (
        <svg width="23" height="19" viewBox="0 0 23 19">
            <path d="M0 1 H9 L11 3 H23 V19 H0 Z" fill="#f7d774" />
            <rect x="0" y="1" width="23" height="3" fill="#eec458" />
            <path d="M7 11 H16 V19 H13.5 V14 H9.5 V19 H7 Z" fill="#3e8fd0" />
            <rect x="0" y="17.5" width="23" height="1.5" fill="#d9a63c" />
        </svg>
    );
}

function FirefoxIcon() {
    return (
        <svg width="24" height="25" viewBox="0 0 24 25">
            <defs>
                <linearGradient id="foxFill" x1="0" y1="0" x2="0" y2="1">
                    <stop offset="0" stopColor="#ff9d28" />
                    <stop offset="0.6" stopColor="#ff4b3a" />
                    <stop offset="1" stopColor="#e8316e" />
                </linearGradient>
            </defs>
            <circle cx="12" cy="14" r="11" fill="url(#foxFill)" />
            <path d="M11 3 Q14 0 15 0 Q14 4 17 5 Q20 6 21 10 Q18 7 14 8 Z" fill="#ffc22c" />
            <circle cx="12.5" cy="13.5" r="5.8" fill="#6a2fc0" />
            <path d="M2 7 Q1 12 3 15 Q5 11 8 11 Q5 9 6 5 Z" fill="#ffb020" />
        </svg>
    );
}

function ChromeIcon() {
    return (
        <svg width="24" height="24" viewBox="0 0 24 24">
            <circle cx="12" cy="12" r="12" fill="#34a853" />
            <path d="M12 0 A12 12 0 0 1 22.4 6 H12 A6 6 0 0 0 6.8 9 L1.6 6 A12 12 0 0 1 12 0 Z" fill="#ea4335" />
            <path d="M22.4 6 A12 12 0 0 1 12 24 L17.2 15 A6 6 0 0 0 17.2 9 L12 6 Z" fill="#fbc02d" />
            <circle cx="12" cy="12" r="5.6" fill="#fff" />
            <circle cx="12" cy="12" r="4.4" fill="#4285f4" />
        </svg>
    );
}

function MeetIcon() {
    return (
        <svg width="16" height="16" viewBox="0 0 16 16">
            <path d="M2 4 Q4 1 8 1 M2 12 Q4 15 8 15" fill="none" stroke="#fff" strokeWidth="1" />
            <rect x="1.5" y="5" width="8" height="6" fill="none" stroke="#fff" strokeWidth="1" />
            <path d="M10 7 L14.5 5 V11 L10 9" fill="none" stroke="#fff" strokeWidth="1" />
        </svg>
    );
}

function VolumeIcon() {
    return (
        <svg width="16" height="14" viewBox="0 0 16 14">
            <path d="M0.5 5 H3 L7 1 V13 L3 9 H0.5 Z" fill="none" stroke="#fff" strokeWidth="1" />
            <path d="M9 5 Q10.5 7 9 9 M11 3 Q13.5 7 11 11 M13 1 Q16.5 7 13 13" fill="none" stroke="#fff" strokeWidth="1" />
        </svg>
    );
}

function NetworkIcon() {
    return (
        <svg width="16" height="15" viewBox="0 0 16 15">
            <path d="M3 3 H15.5 V11 H3 V7 M0.5 0.5 H6 V7 H0.5 Z M9 11 V14 M6 14.5 H12" fill="none" stroke="#fff" strokeWidth="1" />
        </svg>
    );
}

function NotifyIcon() {
    return (
        <svg width="16" height="16" viewBox="0 0 16 16">
            <path d="M0.5 0.5 H15.5 V12 H10.5 L8 14.5 L5.5 12 H0.5 Z" fill="none" stroke="#fff" strokeWidth="1" />
        </svg>
    );
}

/* ---------- data ---------- */

type Tool = { label: string; width: number; art: ReactNode };

const leftTools: Tool[] = [
    { label: "Add", width: 44, art: <RarIcon size={35} /> },
    { label: "Extract To", width: 74, art: <ExtractIcon /> },
    { label: "Test", width: 44, art: <TestIcon /> },
    { label: "View", width: 62, art: <ViewIcon /> },
    { label: "Delete", width: 48, art: <DeleteIcon /> },
    { label: "Find", width: 62, art: <FindIcon /> },
    { label: "Wizard", width: 48, art: <WizardIcon /> },
    { label: "Info", width: 62, art: <InfoIcon /> },
];

const rightTools: Tool[] = [
    { label: "VirusScan", width: 71, art: <VirusIcon /> },
    { label: "Comment", width: 56, art: <CommentIcon /> },
    { label: "SFX", width: 62, art: <SfxIcon /> },
];

const menus = [
    { label: "File", w: 31 },
    { label: "Commands", w: 76 },
    { label: "Tools", w: 41 },
    { label: "Favorites", w: 61 },
    { label: "Options", w: 56 },
    { label: "Help", w: 40 },
];

const treeRows: { indent: number; icon?: ReactNode; label?: string; selected?: boolean }[] = [
    { indent: 41, icon: <FilmIcon /> },
    { indent: 40, icon: <NetDriveIcon /> },
    { indent: 50, icon: <FolderIcon pale /> },
    { indent: 50, icon: <FolderIcon /> },
    { indent: 50, icon: <FolderIcon /> },
    { indent: 50, icon: <FolderIcon /> },
    { indent: 50, icon: <FolderIcon pale /> },
    { indent: 50, icon: <FolderIcon /> },
    { indent: 58, icon: <FolderIcon /> },
    { indent: 0 },
    { indent: 0 },
    { indent: 0 },
    { indent: 0 },
    { indent: 64, icon: <DesktopFolderIcon />, label: "Desktop" },
    { indent: 67, icon: <DocsIcon />, label: "Documents" },
    { indent: 64, icon: <DownArrowIcon size={16} />, label: "Downloads", selected: true },
];

const ToolItem = (props: { tool: Tool }) => (
    <ToolButton $w={props.tool.width}>
        <ToolArt>{props.tool.art}</ToolArt>
        {props.tool.label}
    </ToolButton>
);

export default function App() {
    return (
        <Screen>
            <GlobalStyle />
            <Wallpaper>
                <ShortcutIcon $x={17} $y={10} $w={38}><RecycleTop /></ShortcutIcon>
                <ShortcutIcon $x={90} $y={10} $w={38}><DocTop w={34} blue /></ShortcutIcon>
                <ShortcutIcon $x={168} $y={10} $w={38}><DocTop w={34} /></ShortcutIcon>
                <ShortcutIcon $x={0} $y={618} $w={72}>
                    <VlcIcon />
                    <ShortcutLabel>VLC media<br />player</ShortcutLabel>
                </ShortcutIcon>
                <ShortcutIcon $x={75} $y={618} $w={72}>
                    <SheetIcon />
                    <ShortcutLabel>sheetcloth...</ShortcutLabel>
                </ShortcutIcon>
                <EdgeSpeck />

                <ExplorerWindow>
                    <ExplorerTitle>
                        <QuickAccess>
                            <DownArrowIcon size={17} />
                            <QuickSep />
                            <CheckDocIcon />
                            <FolderIcon w={12} h={15} />
                            <DropMark />
                            <QuickSep />
                        </QuickAccess>
                        <ContextTab>Extract</ContextTab>
                        <TitleText>Downloads</TitleText>
                        <ExplorerButtons>
                            <WinMin color="#b5b5b5" />
                            <WinMax color="#b5b5b5" />
                            <WinClose color="#b5b5b5" />
                        </ExplorerButtons>
                    </ExplorerTitle>
                    <TabRow>
                        <FileTab>File</FileTab>
                        <TabRight>
                            <Chevron up color="#b5b5b5" w={11} />
                            <HelpBadge>?</HelpBadge>
                        </TabRight>
                    </TabRow>
                    <Ribbon>
                        <PinBlock>
                            <PinIcon />
                            <div>Pin to Quick<br />access</div>
                        </PinBlock>
                    </Ribbon>
                    <NavBar>
                        <NavArrows>
                            <Arrow dir="left" />
                            <Arrow dir="right" />
                        </NavArrows>
                        <SearchBox>
                            Search Downloads
                            <LensIcon />
                        </SearchBox>
                    </NavBar>
                    <ExplorerBody>
                        <NavTree>
                            {treeRows.map((row, i) => (
                                <TreeRow key={i} $indent={row.indent} $selected={row.selected}>
                                    {row.icon}
                                    {row.label}
                                </TreeRow>
                            ))}
                        </NavTree>
                        <TreeScroll>
                            <Chevron color="#555" w={10} />
                        </TreeScroll>
                        <ContentPane>
                            <GroupLine $gap={44} />
                            <GroupLine $gap={94} />
                        </ContentPane>
                    </ExplorerBody>
                    <ExplorerStatus>
                        <StatusPart $w={59}>8 items</StatusPart>
                        <StatusPart $w={85}>1 item selected</StatusPart>
                        <StatusPart $w={60}>73.2 MB</StatusPart>
                        <ViewButtons>
                            <ViewButton $on><DetailsViewIcon /></ViewButton>
                            <ViewButton><ThumbViewIcon /></ViewButton>
                        </ViewButtons>
                    </ExplorerStatus>
                </ExplorerWindow>

                <RarWindow>
                    <RarTitle>
                        <RarIcon size={15} />
                        <RarTitleText>260222-vmhgmsaz5a_pw_infected.zip</RarTitleText>
                        <RarControls>
                            <WinMin color="#000" />
                            <WinMax color="#000" />
                            <WinClose color="#000" />
                        </RarControls>
                    </RarTitle>
                    <MenuBar>
                        {menus.map((m) => (
                            <MenuItem key={m.label} $w={m.w}>{m.label}</MenuItem>
                        ))}
                    </MenuBar>
                    <ToolbarRow>
                        <Gripper />
                        <ToolButtons>
                            {leftTools.map((t) => <ToolItem key={t.label} tool={t} />)}
                            <ToolSep />
                            {rightTools.map((t) => <ToolItem key={t.label} tool={t} />)}
                        </ToolButtons>
                    </ToolbarRow>
                    <AddressRow>
                        <UpSlot><UpArrowIcon /></UpSlot>
                        <AddressBox>
                            <RarIcon size={16} />
                            <AddressText>260222-vmhgmsaz5a_pw_infected.zip - ZIP archive, unpacked size 76,965,496 bytes</AddressText>
                            <Chevron color="#555" w={9} />
                        </AddressBox>
                    </AddressRow>
                    <FileList>
                        <ListHeader>
                            <HeadCell $first>Name</HeadCell>
                            <HeadCell $right>Size</HeadCell>
                            <HeadCell $right>Packed</HeadCell>
                            <HeadCell>Type</HeadCell>
                            <HeadCell>Modified</HeadCell>
                            <HeadCell>CRC32</HeadCell>
                            <SortMark><Chevron up color="#888" w={10} /></SortMark>
                        </ListHeader>
                        <ListBody>
                            <FileRow>
                                <NameCell>
                                    <IconSlot><FolderIcon /></IconSlot>
                                    <FileName>..</FileName>
                                </NameCell>
                                <DataCell $right />
                                <DataCell $right />
                                <DataCell>File folder</DataCell>
                                <DataCell />
                                <DataCell />
                            </FileRow>
                            <FileRow>
                                <NameCell>
                                    <IconSlot><ExeIcon /></IconSlot>
                                    <FileName $selected>798.exe *</FileName>
                                </NameCell>
                                <DataCell $selected $right>76,965,496</DataCell>
                                <DataCell $selected $right>76,827,314</DataCell>
                                <DataCell $selected>Application</DataCell>
                                <DataCell $selected />
                                <DataCell $selected />
                            </FileRow>
                        </ListBody>
                    </FileList>
                    <RarStatus>
                        <StatusLeft>
                            <DriveKeyIcon />
                            Selected 1 file, 76,965,496 bytes
                        </StatusLeft>
                        <StatusRight>Total 1 file, 76,965,496 bytes</StatusRight>
                        <SizeGrip><GripIcon /></SizeGrip>
                    </RarStatus>
                </RarWindow>

                <Watermark>
                    <MarkWord $w={69} $scale={0.62}>ANY</MarkWord>
                    <LogoPlay />
                    <MarkWord $w={60} $scale={0.57}>RUN</MarkWord>
                </Watermark>
                <SystemNote>
                    Test Mode<br />
                    Windows 10 Pro<br />
                    Build 19041.vb_release.191206-1406
                </SystemNote>
            </Wallpaper>

            <Taskbar>
                <StartButton><WindowsLogo /></StartButton>
                <SearchBar>
                    <SearchGlyph />
                    <SearchHint>Type here to search</SearchHint>
                    <PuzzleSlot><PuzzleArt /></PuzzleSlot>
                </SearchBar>
                <TaskButton $w={51}><TaskViewIcon /></TaskButton>
                <TaskButton $w={48}><EdgeIcon /></TaskButton>
                <TaskButton $w={49} $running><ExplorerFolder /></TaskButton>
                <TaskButton $w={50}><FirefoxIcon /></TaskButton>
                <TaskButton $w={49} $running><ChromeIcon /></TaskButton>
                <TaskButton $w={48} $running $active><RarIcon size={24} /></TaskButton>
                <Tray>
                    <TrayIcon><Chevron up color="#fff" w={12} /></TrayIcon>
                    <TrayIcon><MeetIcon /></TrayIcon>
                    <TrayIcon><VolumeIcon /></TrayIcon>
                    <TrayIcon><NetworkIcon /></TrayIcon>
                    <Clock>12:19 PM<br />2/22/2026</Clock>
                    <NotifySlot><NotifyIcon /></NotifySlot>
                    <ShowDesktop />
                </Tray>
            </Taskbar>
        </Screen>
    );
}
